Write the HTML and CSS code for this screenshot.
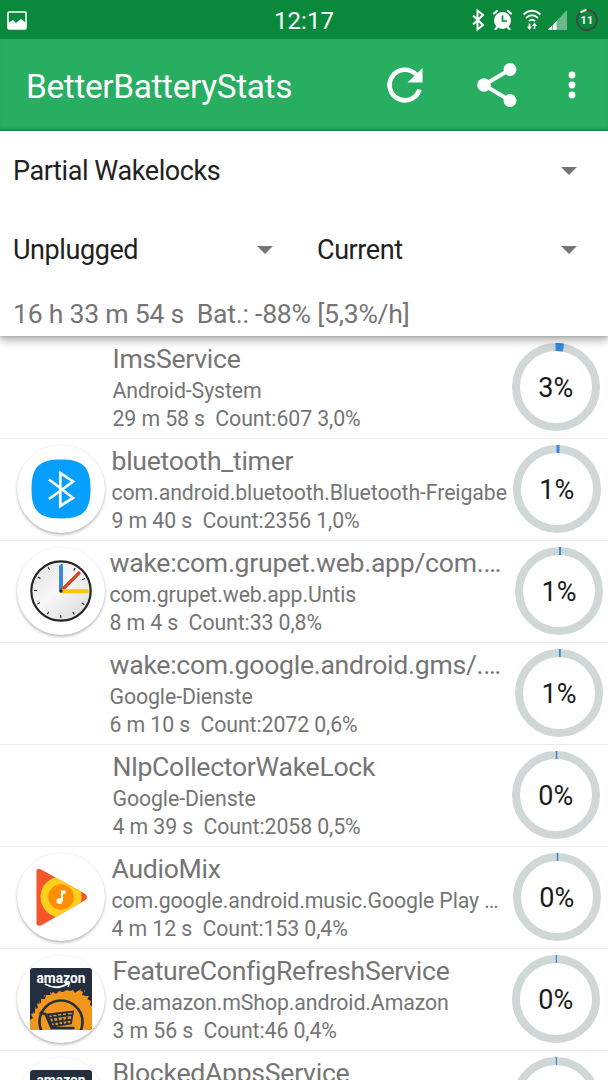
FILE: index.html
```html
<!DOCTYPE html>
<html lang="de">
<head>
  <meta charset="UTF-8" />
  <meta name="viewport" content="width=device-width, initial-scale=1.0" />
  <title>BetterBatteryStats</title>
  <link rel="stylesheet" href="styles.css">
</head>
<body>
  <!-- Shared icons -->
  <svg class="defs" width="0" height="0">
    <symbol id="ring" viewBox="0 0 88 88">
      <circle cx="44" cy="44" r="40" fill="none" stroke="#cfd8d7" stroke-width="8" />
    </symbol>
    <symbol id="amazon" viewBox="0 0 62 62">
      <clipPath id="tile"><rect width="62" height="62" rx="3" /></clipPath>
      <g clip-path="url(#tile)">
        <rect width="62" height="62" fill="#232f3e" />
        <path d="M0 62V52l3-2-2-4 4-1 0-4 3-1-1-4 4-1 0-4 4 0 1-4 4 0 3-3 3 2 3-3 4 1 4-2 3 1 3-1 2 3 4-3 4 2-1 3 4 1 3 0-2 3 4 2-1 4 3 2-1 4V62z" fill="#f3961c" />
        <path d="M5 40h1M9 34h1M14 28h1M50 22h1M54 23h1M3 45h1M20 25h1M57 30h1M12 36h1" stroke="#f3961c" stroke-width="1.2" />
        <circle cx="31" cy="54" r="21.5" fill="none" stroke="#232f3e" stroke-width="2.6" />
        <path d="M10.500 45l5 1 6 14h22" fill="none" stroke="#232f3e" stroke-width="2.400" stroke-linecap="round" />
        <path d="M18 46.500l25-3-2 12-19 3zM22 46l3 12M27 45.500l2 12M32 45l1 12M37 44.500l0 11M19 50l23-3M21 54.500l21-3" fill="none" stroke="#232f3e" stroke-width="1.800" />
        <text x="31" y="14.500" text-anchor="middle" class="amazon-name" textLength="49" lengthAdjust="spacingAndGlyphs">amazon</text>
        <path d="M15 16q12 7 24-1" fill="none" stroke="#fff" stroke-width="1.800" />
        <path d="M35 15.500l4.500-.5-1.500 4" fill="none" stroke="#fff" stroke-width="1.300" />
      </g>
    </symbol>
  </svg>

  <div class="status-bar">
    <svg class="st-picture" width="20" height="19" viewBox="0 0 20 19">
      <rect x="1" y="1" width="18" height="17" rx="1" fill="none" stroke="#fff" stroke-width="1.600" />
      <path d="M1 18v-6l5-3 3 3 5-4 5 4v6z" fill="#fff" />
    </svg>
    <span class="clock">12:17</span>
    <svg class="st-icons" width="130" height="24" viewBox="0 0 130 24">
      <path d="M2 7.500l10 9.500-5.500 4.500v-19L12 7 2 16.500" fill="none" stroke="#fff" stroke-width="2" />
      <g fill="none" stroke="#fff" stroke-width="2.200" stroke-linecap="round">
        <path d="M23 5.500l3-2.500M37 3l3 2.500M26 19.500l-1.500 1.500M37 19.500l1.500 1.500" />
      </g>
      <circle cx="31.500" cy="12.500" r="8.500" fill="#fff" />
      <path d="M31.500 7.500v5.500h4.500" fill="none" stroke="#0a893d" stroke-width="1.700" />
      <g fill="none" stroke="#fff" stroke-width="1.900">
        <path d="M52.500 6.500q8.500-7.500 17 0M55 10q6-5.500 12 0M58 13q3-2.500 6 0" />
        <path d="M58.500 15.500v5M63.500 21v-5" stroke-width="1.600" />
      </g>
      <path d="M56 18.500h5l-2.500 3.500zM61 18h5l-2.500-3.500z" fill="#fff" />
      <path d="M77 22l19-20v20z" fill="#6cba8b" />
      <path d="M77 22v-1l4-3v4zM82 22v-5l3.500-4v9z" fill="#fff" />
      <circle cx="116" cy="12" r="10" fill="none" stroke="#3b4a42" stroke-width="1.800" />
      <path d="M109.500 4.500a10 10 0 0 1 6-2.500" fill="none" stroke="#fff" stroke-width="1.800" />
      <text x="116" y="15.800" text-anchor="middle" class="battery">11</text>
    </svg>
  </div>

  <div class="app-bar">
    <h1>BetterBatteryStats</h1>
    <svg class="refresh" width="36" height="36" viewBox="0 0 36 36">
      <path d="M32.500 22.500A15.300 15.300 0 1 1 29 7.500" fill="none" stroke="#fff" stroke-width="4.600" />
      <path d="M35.500 1v14.500h-15z" fill="#fff" />
    </svg>
    <svg class="share" width="40" height="44" viewBox="0 0 40 44">
      <path d="M33 6.500L7 22l26 15.500" fill="none" stroke="#fff" stroke-width="4" />
      <circle cx="33" cy="6.500" r="6.500" fill="#fff" />
      <circle cx="7" cy="22" r="6.800" fill="#fff" />
      <circle cx="33" cy="37.500" r="6.500" fill="#fff" />
    </svg>
    <svg class="more" width="8" height="28" viewBox="0 0 8 28">
      <circle cx="4" cy="4" r="3.400" fill="#fff" />
      <circle cx="4" cy="14" r="3.400" fill="#fff" />
      <circle cx="4" cy="24" r="3.400" fill="#fff" />
    </svg>
  </div>

  <div class="header">
    <div class="spinner">Partial Wakelocks<i class="arrow"></i></div>
    <div class="spinner-row">
      <div class="spinner">Unplugged<i class="arrow"></i></div>
      <div class="spinner">Current<i class="arrow"></i></div>
    </div>
    <p class="since">16 h 33 m 54 s&nbsp; Bat.: -88% [5,3%/h]</p>
  </div>

  <!-- Wakelock list -->
  <div class="list">
    <div class="row">
      <div class="icon"></div>
      <div class="info">
        <h2>ImsService</h2>
        <p>Android-System</p>
        <p>29 m 58 s&nbsp; Count:607 3,0%</p>
      </div>
      <svg class="gauge" viewBox="0 0 88 88">
        <use href="#ring" /><path d="M43.500 0H48q2 0 4 .7L51 8.600q-3.500-.6-7.500-.6z" fill="#348adc" />
        <text x="43.700" y="53.500">3%</text>
      </svg>
    </div>

    <div class="row mid">
      <div class="icon circle">
        <svg width="60" height="60" viewBox="0 0 60 60">
          <path d="M30 .5C52 .5 59.500 8 59.500 30S52 59.500 30 59.500.5 52 .5 30 8 .5 30 .5z" fill="#069fff" />
          <path d="M18 20.500l24 18.300-12.700 8.200V14L42 22.500 18 40" fill="none" stroke="#fff" stroke-width="2.700" />
        </svg>
      </div>
      <div class="info">
        <h2>bluetooth_timer</h2>
        <p>com.android.bluetooth.Bluetooth-Freigabe</p>
        <p>9 m 40 s&nbsp; Count:2356 1,0%</p>
      </div>
      <svg class="gauge" viewBox="0 0 88 88">
        <use href="#ring" /><path d="M43.500 0h3v8h-3z" fill="#348adc" />
        <text x="43.700" y="53.500">1%</text>
      </svg>
    </div>

    <div class="row wide">
      <div class="icon circle">
        <svg width="62" height="62" viewBox="0 0 62 62">
          <linearGradient id="face" x1="0" y1="0" x2="1" y2="1">
            <stop offset="0" stop-color="#dedede" /><stop offset=".45" stop-color="#f8f8f8" /><stop offset="1" stop-color="#d8d8d8" />
          </linearGradient>
          <circle cx="31" cy="31" r="29.700" fill="url(#face)" stroke="#252525" stroke-width="2.200" />
          <circle cx="31" cy="31" r="25.500" fill="none" stroke="#222" stroke-width="3" stroke-dasharray="1.100 12.252" stroke-dashoffset=".55" />
          <path d="M31 30V6.500" stroke="#3e86d6" stroke-width="4" stroke-linecap="round" />
          <path d="M32.500 29.500L49 13" stroke="#d6492a" stroke-width="3.400" stroke-linecap="round" />
          <path d="M32 31.200h25" stroke="#fcc800" stroke-width="4" stroke-linecap="round" />
          <circle cx="31" cy="31" r="1.700" fill="#222" />
        </svg>
      </div>
      <div class="info">
        <h2>wake:com.grupet.web.app/com.…</h2>
        <p>com.grupet.web.app.Untis</p>
        <p>8 m 4 s&nbsp; Count:33 0,8%</p>
      </div>
      <svg class="gauge" viewBox="0 0 88 88">
        <use href="#ring" /><path d="M44 0h2v8h-2z" fill="#348adc" />
        <text x="44" y="53.500">1%</text>
      </svg>
    </div>

    <div class="row wide">
      <div class="icon"></div>
      <div class="info">
        <h2>wake:com.google.android.gms/.…</h2>
        <p>Google-Dienste</p>
        <p>6 m 10 s&nbsp; Count:2072 0,6%</p>
      </div>
      <svg class="gauge" viewBox="0 0 88 88">
        <use href="#ring" /><path d="M44 0h1.800v8H44z" fill="#348adc" />
        <text x="44" y="53.500">1%</text>
      </svg>
    </div>

    <div class="row">
      <div class="icon"></div>
      <div class="info">
        <h2>NlpCollectorWakeLock</h2>
        <p>Google-Dienste</p>
        <p>4 m 39 s&nbsp; Count:2058 0,5%</p>
      </div>
      <svg class="gauge" viewBox="0 0 88 88">
        <use href="#ring" /><path d="M43.800 0h1.500v8h-1.500z" fill="#348adc" />
        <text x="43.700" y="53.500">0%</text>
      </svg>
    </div>

    <div class="row mid">
      <div class="icon circle">
        <svg width="62" height="62" viewBox="0 0 62 62">
          <clipPath id="play"><path d="M6.500 5Q7 1.500 11 3.500L55.500 28q3 3 0 6L11 59.500q-4 1-4.500-2z" /></clipPath>
          <g clip-path="url(#play)">
            <rect width="62" height="62" fill="#f4552b" />
            <circle cx="31" cy="31" r="20.500" fill="#ffd01c" />
            <circle cx="31" cy="31" r="12.800" fill="#ff8f00" />
          </g>
          <circle cx="29.500" cy="35" r="3" fill="#fff" />
          <path d="M31 35V24.500h4.500v3.200h-2.500V35z" fill="#fff" />
        </svg>
      </div>
      <div class="info">
        <h2>AudioMix</h2>
        <p>com.google.android.music.Google Play …</p>
        <p>4 m 12 s&nbsp; Count:153 0,4%</p>
      </div>
      <svg class="gauge" viewBox="0 0 88 88">
        <use href="#ring" /><path d="M43.800 0h1.500v8h-1.500z" fill="#348adc" />
        <text x="43.700" y="53.500">0%</text>
      </svg>
    </div>

    <div class="row">
      <div class="icon circle"><svg width="62" height="62"><use href="#amazon" /></svg></div>
      <div class="info">
        <h2>FeatureConfigRefreshService</h2>
        <p>de.amazon.mShop.android.Amazon</p>
        <p>3 m 56 s&nbsp; Count:46 0,4%</p>
      </div>
      <svg class="gauge" viewBox="0 0 88 88">
        <use href="#ring" /><path d="M43.800 0h1.200v8h-1.200z" fill="#348adc" />
        <text x="43.700" y="53.500">0%</text>
      </svg>
    </div>

    <div class="row">
      <div class="icon circle"><svg width="62" height="62"><use href="#amazon" /></svg></div>
      <div class="info">
        <h2>BlockedAppsService</h2>
      </div>
      <svg class="gauge" viewBox="0 0 88 88">
        <use href="#ring" /><path d="M43.800 0h1.200v8h-1.200z" fill="#348adc" />
      </svg>
    </div>
  </div>
</body>
</html>
```

FILE: styles.css
```css
/* Base styling */
* { box-sizing: border-box; }
body {
  font-family: Roboto, "Liberation Sans", sans-serif;
  background: #fff;
  color: #757575;
  margin: 0;
  height: 1080px;
  overflow: hidden;
  display: flex;
  flex-direction: column;
}
h1, h2, p {
  margin: 0;
  font-weight: 400;
  white-space: nowrap;
}
svg { display: block; flex: none; }
.defs { position: absolute; }

/* Status bar */
.status-bar {
  flex: none;
  height: 39px;
  background: #0a893d;
  display: grid;
  grid-template-columns: 1fr auto 1fr;
  align-items: center;
  padding: 0 7px 0 7px;
}
.clock {
  color: #fff;
  font-size: 24px;
  line-height: 28px;
  padding-top: 3px;
}
.st-picture { margin-top: 2px; }
.st-icons { justify-self: end; }
.battery {
  font-size: 10.5px;
  font-weight: 700;
  letter-spacing: 0.4px;
  fill: #fff;
}

/* App bar */
.app-bar {
  flex: none;
  height: 92px;
  background: #28ae61;
  display: flex;
  align-items: center;
  padding: 0 32px 0 26px;
  box-shadow: inset 0 -3px 3px -2px rgba(0, 60, 20, 0.5);
}
.app-bar h1 {
  color: #fff;
  font-size: 33.4px;
  letter-spacing: -0.35px;
  line-height: 40px;
  margin-top: 4px;
  flex: 1;
}
.share { margin: 0 51px 0 54px; }

/* Spinners */
.header {
  flex: none;
  height: 205px;
  background: #fff;
  position: relative;
  z-index: 1;
  box-shadow: 0 5px 8px rgba(0, 0, 0, 0.28), 0 1px 2px rgba(0, 0, 0, 0.12);
}
.spinner {
  flex: 1;
  height: 79px;
  display: flex;
  align-items: center;
  justify-content: space-between;
  padding: 0 31px 0 13px;
  font-size: 27px;
  letter-spacing: -0.42px;
  color: #212121;
}
.spinner-row { display: flex; }
.arrow {
  border: 8px solid transparent;
  border-top-color: #757575;
  border-bottom: 0;
}
.since {
  font-size: 26.6px;
  letter-spacing: -0.24px;
  line-height: 32px;
  padding: 9px 13px 0;
}

/* List */
.list {
  flex: 1;
  min-height: 0;
  overflow: hidden;
  padding-top: 1px;
}
.row {
  height: 102px;
  display: flex;
  align-items: flex-start;
  border-bottom: 1px solid #ececec;
  padding: 6px 8px 0 16.5px;
}
.icon {
  flex: none;
  width: 88px;
  height: 88px;
  margin-right: 8px;
  border-radius: 50%;
  display: flex;
  align-items: center;
  justify-content: center;
}
.circle {
  box-shadow: 0 2px 3px rgba(0, 0, 0, 0.25), 0 0 1px rgba(0, 0, 0, 0.12);
}
.info {
  flex: 1;
  min-width: 0;
}
.info h2 {
  font-size: 26.6px;
  letter-spacing: -0.28px;
  line-height: 32px;
  margin-bottom: 2px;
}
.info p {
  font-size: 21.3px;
  letter-spacing: -0.1px;
  line-height: 28px;
}
.gauge {
  width: 88px;
  height: 88px;
}
.gauge text {
  font-size: 27px;
  fill: #1a1a1a;
  text-anchor: middle;
}

/* Rows whose text column is a little wider */
.mid { padding-right: 7px; }
.mid .icon { margin-right: 7px; }
.wide { padding-right: 5px; }
.wide .icon { margin-right: 5px; }

.amazon-name {
  font-size: 14px;
  font-weight: 700;
  fill: #fff;
}
```
